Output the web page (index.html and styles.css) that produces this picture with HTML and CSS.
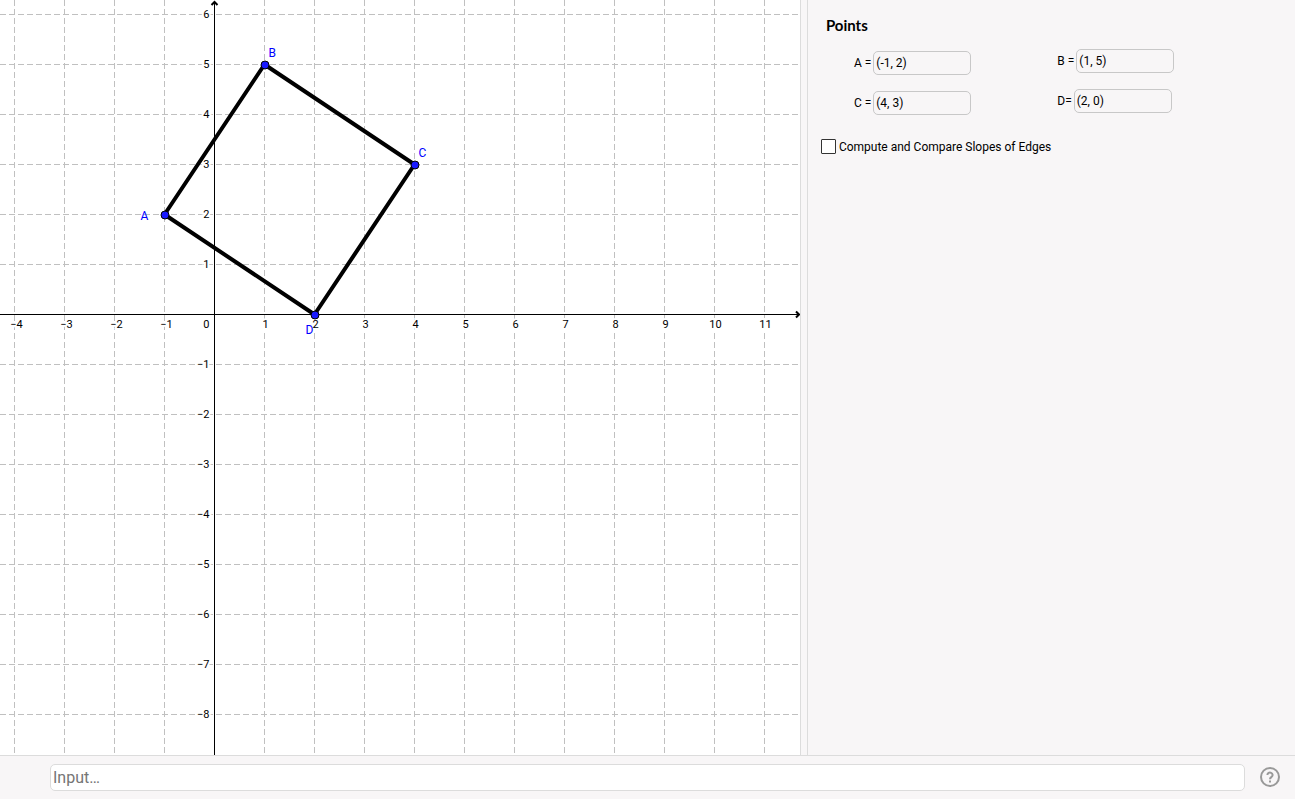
FILE: index.html
```
<!DOCTYPE html>
<html lang="en">
  <head>
    <meta charset="UTF-8" />
    <title>Slopes of a Quadrilateral</title>
    <link rel="stylesheet" href="styles.css" />
  </head>
  <body>
    <main class="views">
      <section class="graph">
        <svg id="graph" class="plane" role="img" aria-label="Quadrilateral ABCD on a coordinate grid"></svg>
      </section>

      <section class="panel">
        <h2>Points</h2>
        <div class="points">
          <div class="column">
            <div class="point">
              <label for="point-a">A =</label>
              <input type="text" id="point-a" value="(-1, 2)" />
            </div>
            <div class="point">
              <label for="point-c">C =</label>
              <input type="text" id="point-c" value="(4, 3)" />
            </div>
          </div>
          <div class="column column-right">
            <div class="point">
              <label for="point-b">B =</label>
              <input type="text" id="point-b" value="(1, 5)" />
            </div>
            <div class="point">
              <label for="point-d">D=</label>
              <input type="text" id="point-d" value="(2, 0)" />
            </div>
          </div>
        </div>
        <div class="option">
          <input type="checkbox" id="slopes" />
          <label for="slopes">Compute and Compare Slopes of Edges</label>
        </div>
      </section>
    </main>

    <footer class="input-bar">
      <input type="text" class="command" placeholder="Input…" aria-label="Input" />
      <button type="button" class="help" aria-label="Help">
        <svg width="20" height="20" viewBox="0 0 20 20">
          <circle cx="10" cy="10" r="9" />
          <path d="M7.4 8a2.6 2.4 0 1 1 4.3 1.8c-1 .8-1.7 1.1-1.7 2.4" />
          <path d="M10 13.4v2.2" />
        </svg>
      </button>
    </footer>

    <script src="graph.js"></script>
  </body>
</html>
```
FILE: styles.css
```
* {
  box-sizing: border-box;
}
body {
  margin: 0;
  padding: 0 2px 1px 0;
  height: 100vh;
  display: flex;
  flex-direction: column;
  font-family: Roboto, "Liberation Sans", sans-serif;
  font-size: 12px;
  color: #000;
}
.views {
  flex: 1;
  min-height: 0;
  display: grid;
  grid-template-columns: 62fr 38fr;
  background-color: #f8f6f7;
}
.graph {
  min-width: 0;
  min-height: 0;
  margin-right: 2px;
  background-color: #fff;
  border-right: 1px solid #dcdcdc;
  overflow: hidden;
}
.plane {
  display: block;
  width: 100%;
  height: 100%;
}

/* drawing */
.grid {
  stroke: #c0c0c0;
  stroke-dasharray: 6 3;
}
.axis {
  fill: none;
  stroke: #000;
}
.arrow {
  fill: none;
  stroke: #000;
  stroke-width: 2px;
}
.tick {
  font-size: 11px;
  stroke: #fff;
  stroke-width: 4px;
  paint-order: stroke;
}
.shape {
  fill: none;
  stroke: #000;
  stroke-width: 4px;
  stroke-linejoin: round;
}
.dot {
  fill: #1919ff;
  stroke: #000;
}
.name {
  font-size: 12px;
  fill: #0000ff;
}

/* right side */
.panel {
  border-left: 1px solid #dcdcdc;
  margin-left: 4px;
  padding: 15px 12px;
}
h2 {
  margin: 0 0 16px 6px;
  font-family: Lato, sans-serif;
  font-size: 15px;
  line-height: 20px;
}
.points {
  display: flex;
  gap: 86px;
  padding-left: 34px;
}
.column {
  display: flex;
  flex-direction: column;
  gap: 16px;
}
.column-right {
  margin-top: -2px;
}
.point {
  display: flex;
  align-items: center;
  gap: 2px;
}
.point input {
  width: 98px;
  height: 24px;
  padding: 2px;
  font: inherit;
  background-color: #f8f6f7;
  border: 1px solid #c8c8c8;
  border-radius: 5px;
}
.option {
  display: flex;
  align-items: center;
  gap: 3px;
  margin-top: 24px;
}
.option input {
  appearance: none;
  width: 15px;
  height: 15px;
  margin: 0 0 0 1px;
  background-color: #fff;
  border: 1px solid #333;
  border-radius: 1px;
}
.option input:checked {
  background-color: #333;
}

/* bottom bar */
.input-bar {
  display: flex;
  align-items: center;
  gap: 15px;
  height: 44px;
  padding: 0 15px 1px 50px;
  background-color: #f8f6f7;
  border-top: 1px solid #dcdcdc;
}
.command {
  flex: 1;
  height: 27px;
  padding: 0 2px;
  font: inherit;
  font-size: 16px;
  border: 1px solid #dcdcdc;
  border-radius: 5px;
}
.command::placeholder {
  color: #757575;
}
.help {
  padding: 0;
  border: none;
  background: none;
  cursor: pointer;
}
.help svg {
  display: block;
  fill: none;
  stroke: #999;
  stroke-width: 2;
}
```
FILE: graph.js
```
const svg = document.getElementById("graph");
const unit = 50;
const origin = { x: 214, y: 314 };

const points = [
  { name: "A", x: -1, y: 2, dx: -24, dy: 5 },
  { name: "B", x: 1, y: 5, dx: 4, dy: -8 },
  { name: "C", x: 4, y: 3, dx: 4, dy: -8 },
  { name: "D", x: 2, y: 0, dx: -9, dy: 19 },
];

function add(tag, attrs, text) {
  const el = document.createElementNS("http://www.w3.org/2000/svg", tag);
  for (const key in attrs) el.setAttribute(key, attrs[key]);
  if (text !== undefined) el.textContent = text;
  svg.appendChild(el);
}

// sharp one pixel lines sit on half pixels
function px(x) {
  return origin.x + x * unit + 0.5;
}
function py(y) {
  return origin.y - y * unit + 0.5;
}

function draw() {
  svg.textContent = "";
  const w = svg.clientWidth;
  const h = svg.clientHeight;
  const minX = Math.ceil(-origin.x / unit);
  const maxX = Math.floor((w - origin.x) / unit);
  const minY = Math.ceil((origin.y - h) / unit);
  const maxY = Math.floor(origin.y / unit);

  for (let x = minX; x <= maxX; x++) {
    if (x !== 0) add("line", { class: "grid", x1: px(x), y1: 0, x2: px(x), y2: h });
  }
  for (let y = minY; y <= maxY; y++) {
    if (y !== 0) add("line", { class: "grid", x1: 0, y1: py(y), x2: w, y2: py(y) });
  }

  for (let x = minX; x <= maxX; x++) {
    const label = String(x).replace("-", "−");
    if (x === 0) {
      add("text", { class: "tick", x: px(0) - 5, y: py(0) + 13, "text-anchor": "end" }, label);
    } else {
      const shift = x < 0 ? 2 : 1;
      add("text", { class: "tick", x: px(x) + shift, y: py(0) + 13, "text-anchor": "middle" }, label);
    }
  }
  for (let y = minY; y <= maxY; y++) {
    if (y === 0) continue;
    const label = String(y).replace("-", "−");
    add("text", { class: "tick", x: px(0) - 5, y: py(y) + 3, "text-anchor": "end" }, label);
  }

  // axes with arrow heads
  add("path", { class: "axis", d: `M0 ${py(0)}H${w}M${px(0)} ${h}V1` });
  add("path", { class: "arrow", d: `M${w - 4} ${py(0) - 3}l3 3l-3 3` });
  add("path", { class: "arrow", d: `M${px(0) - 3} 5l3 -3l3 3` });

  const corners = points.map((p) => `${px(p.x)},${py(p.y)}`).join(" ");
  add("polygon", { class: "shape", points: corners });
  points.forEach((p) => {
    add("circle", { class: "dot", cx: px(p.x) + 0.5, cy: py(p.y) + 0.5, r: 4 });
    add("text", { class: "name", x: px(p.x) + p.dx, y: py(p.y) + p.dy }, p.name);
  });
}

window.addEventListener("resize", draw);
draw();
```
